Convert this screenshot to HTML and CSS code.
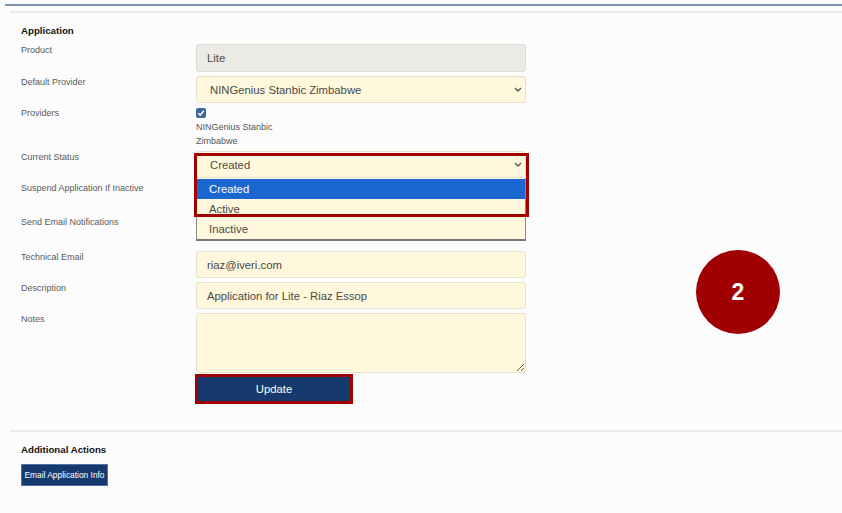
FILE: index.html
```html
<!DOCTYPE html>
<html>
<head>
    <title>Application</title>
    <link rel="stylesheet" href="styles.css">
</head>
<body>
    <div class="top-rule"></div>
    <div class="panel">
        <div class="section-title">Application</div>
        <form class="app-form">
            <div class="form-row">
                <label>Product</label>
                <input type="text" class="field field-disabled" value="Lite" readonly>
            </div>
            <div class="form-row">
                <label>Default Provider</label>
                <div class="select-wrap">
                    <select class="field select-field">
                        <option>NINGenius Stanbic Zimbabwe</option>
                    </select>
                    <svg class="chevron" width="8" height="5" viewBox="0 0 8 5"><path d="M1 1 L4 4 L7 1" fill="none" stroke="#555" stroke-width="1.4"/></svg>
                </div>
            </div>
            <div class="form-row providers-row">
                <label>Providers</label>
                <div class="providers">
                    <span class="check-box">
                        <svg width="10" height="10" viewBox="0 0 10 10"><path d="M2.2 5.2 L4.2 7.2 L7.8 2.8" fill="none" stroke="#fff" stroke-width="1.5"/></svg>
                    </span>
                    <div class="provider-name">NINGenius Stanbic<br>Zimbabwe</div>
                </div>
            </div>
            <div class="form-row">
                <label>Current Status</label>
                <div class="select-wrap">
                    <select class="field select-field">
                        <option>Created</option>
                        <option>Active</option>
                        <option>Inactive</option>
                    </select>
                    <svg class="chevron" width="8" height="5" viewBox="0 0 8 5"><path d="M1 1 L4 4 L7 1" fill="none" stroke="#555" stroke-width="1.4"/></svg>
                    <ul class="option-list">
                        <li class="active-option">Created</li>
                        <li>Active</li>
                        <li>Inactive</li>
                    </ul>
                    <div class="callout-box"></div>
                </div>
            </div>
            <div class="form-row row-suspend">
                <label>Suspend Application If Inactive</label>
                <div></div>
            </div>
            <div class="form-row row-notify">
                <label>Send Email Notifications</label>
                <div></div>
            </div>
            <div class="form-row">
                <label>Technical Email</label>
                <input type="text" class="field" value="riaz@iveri.com">
            </div>
            <div class="form-row">
                <label>Description</label>
                <input type="text" class="field" value="Application for Lite - Riaz Essop">
            </div>
            <div class="form-row notes-row">
                <label>Notes</label>
                <textarea class="field notes-field"></textarea>
            </div>
            <div class="form-row">
                <span></span>
                <div><button type="button" class="update-btn">Update</button></div>
            </div>
        </form>
        <div class="actions">
            <div class="section-title">Additional Actions</div>
            <button type="button" class="email-btn">Email Application Info</button>
        </div>
    </div>
    <div class="step-badge">2</div>
</body>
</html>
```

FILE: styles.css
```css
body {
    margin: 0;
    background: #fcfcfc;
    font-family: "Liberation Sans", Arial, sans-serif;
    color: #555;
}
.top-rule {
    margin: 4px 0 0 5px;
    border-top: 2px solid #8096ad;
}
.panel {
    margin: 5px 0 0 10px;
    border-top: 2px solid #ebebeb;
    padding: 12px 0 0 11px;
}
.section-title {
    font-size: 9.7px;
    font-weight: bold;
    color: #111;
    line-height: 12px;
}
.app-form {
    margin-top: 7px;
}
.form-row {
    display: grid;
    grid-template-columns: 175px 330px;
    margin-bottom: 4px;
}
.form-row label {
    font-size: 9px;
    line-height: 11px;
    padding-top: 1px;
    color: #5a5a5a;
}
.field {
    box-sizing: border-box;
    width: 330px;
    height: 27px;
    margin: 0;
    padding: 0 10px;
    border: 1px solid #e6e0cc;
    border-radius: 3px;
    background: #fff8dc;
    font-family: "Liberation Sans", Arial, sans-serif;
    font-size: 11.3px;
    color: #4a4a4a;
}
.field-disabled {
    height: 28px;
    background: #ebeae5;
    border-color: #dcdcd6;
}
.select-wrap {
    position: relative;
}
.select-field {
    appearance: none;
    padding-left: 13px;
}
.chevron {
    position: absolute;
    right: 4px;
    top: 11px;
}
.providers-row {
    margin-bottom: 3px;
}
.providers {
    padding-top: 1px;
}
.check-box {
    display: block;
    width: 10px;
    height: 10px;
    border-radius: 2px;
    background: #3d6a9c;
    margin-bottom: 2px;
}
.check-box svg {
    display: block;
}
.provider-name {
    font-size: 9px;
    line-height: 14px;
    color: #555;
}
.option-list {
    position: absolute;
    top: 27px;
    left: 0;
    width: 330px;
    box-sizing: border-box;
    margin: 0;
    padding: 1px 0 0;
    list-style: none;
    background: #fff8dc;
    border-left: 1px solid #8a8a8a;
    border-right: 1px solid #8a8a8a;
    border-bottom: 2px solid #777;
    font-size: 11.3px;
    color: #4a4a4a;
    z-index: 2;
}
.option-list li {
    height: 20px;
    line-height: 20px;
    padding-left: 12px;
}
.option-list .active-option {
    background: #1b67d2;
    color: #fff;
}
.callout-box {
    position: absolute;
    top: 2px;
    left: -2px;
    width: 335px;
    height: 64px;
    box-sizing: border-box;
    border: 3px solid #a00000;
    z-index: 3;
}
.row-suspend {
    height: 30px;
}
.row-notify {
    height: 31px;
}
.notes-row {
    margin-bottom: 1px;
}
.notes-field {
    height: 60px;
    resize: vertical;
}
.update-btn {
    display: block;
    width: 158px;
    height: 30px;
    margin-left: -1px;
    border: 3px solid #a00000;
    background: #173a6e;
    color: #fff;
    font-family: "Liberation Sans", Arial, sans-serif;
    font-size: 11.3px;
    cursor: pointer;
}
.actions {
    margin: 26px 0 0 -11px;
    border-top: 2px solid #ebebeb;
    padding: 12px 0 0 11px;
}
.email-btn {
    display: block;
    margin-top: 8px;
    height: 22px;
    width: 87px;
    padding: 0;
    border: 1px solid #4f75a8;
    background: #173a6e;
    color: #fff;
    font-family: "Liberation Sans", Arial, sans-serif;
    font-size: 8.4px;
    cursor: pointer;
}
.step-badge {
    position: absolute;
    left: 696px;
    top: 250px;
    width: 84px;
    height: 84px;
    border-radius: 50%;
    background: #a10000;
    color: #fff;
    font-size: 23px;
    font-weight: bold;
    line-height: 84px;
    text-align: center;
}
```
